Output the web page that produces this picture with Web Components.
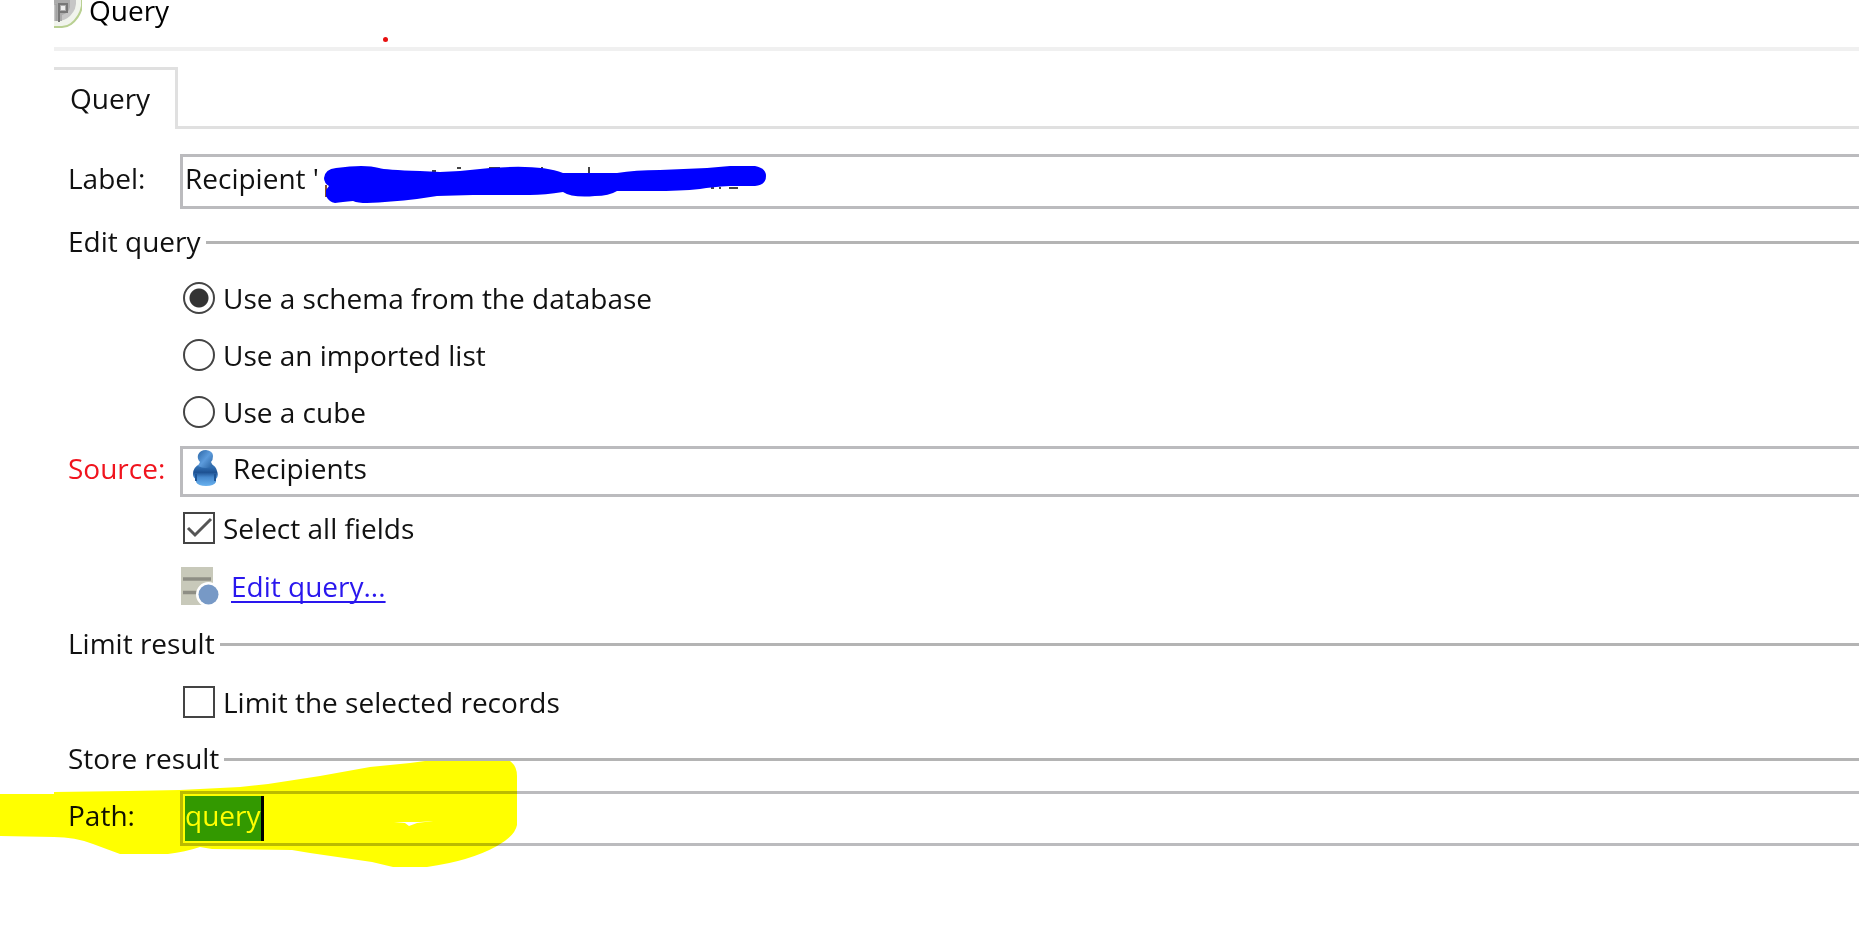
<!DOCTYPE html>
<html lang="en">
<head>
<meta charset="utf-8">
<title>Query</title>
<style>
  body { margin: 0; background: #fff; color: #111; font: 28px/38px "Open Sans", "Noto Sans", sans-serif; overflow: hidden; }
</style>
</head>
<body>
<query-window></query-window>
<script>
const define = (name, html) => customElements.define(name, class extends HTMLElement {
  constructor() {
    super();
    const t = document.createElement('template');
    t.innerHTML = html(this);
    this.attachShadow({ mode: 'open' }).append(t.content.cloneNode(true));
  }
});

define('title-bar', () => `
  <style>
    :host { display: flex; gap: 7px; height: 47px; margin-left: 54px; border-bottom: 4px solid #f0f0f0; color: #000; }
    svg { flex: none; width: 28px; height: 28px; }
    h1 { margin: 0; font: inherit; line-height: 20px; }
  </style>
  <svg viewBox="0 0 28 28" aria-hidden="true">
    <path d="M0 0H28V5Q27 17 17 25L10 27H0Z" fill="#f1f4ed"/>
    <path d="M28 0V6Q26 17 17 24Q13 27 8 27H0" fill="none" stroke="#b9d092" stroke-width="2"/>
    <path d="M0 0H22Q23 9 16 16Q11 21 3 21H0Z" fill="#c6c6c6"/>
    <path d="M0 0H16V7Q15 13 8 15V21H2V3H0Z" fill="#ababab"/>
    <path d="M5 22V4H13V12H5" fill="none" stroke="#777" stroke-width="2"/>
    <path d="M7 6H11V10H7Z" fill="#eee"/>
    <path d="M0 4H2V21" fill="none" stroke="#999" stroke-width="1"/>
  </svg>
  <h1><slot></slot></h1>`);

define('tab-strip', () => `
  <style>
    :host { display: flex; margin: 16px 0 0 54px; }
    button { box-sizing: border-box; width: 124px; height: 62px; padding: 0 0 4px 16px; border: 3px solid #e0e0e0; border-width: 3px 3px 0 0; background: none; font: inherit; color: inherit; text-align: left; }
    div { flex: 1; border-bottom: 3px solid #e0e0e0; }
  </style>
  <button type="button" role="tab" aria-selected="true"><slot></slot></button><div></div>`);

define('text-field', el => `
  <style>
    :host { display: flex; }
    label { flex: none; width: 112px; margin-left: -1px; box-sizing: border-box; padding-bottom: 8px; align-self: center; }
    .box { flex: 1; box-sizing: border-box; height: 55px; border: 3px solid #bbbbbe; border-right: 0; display: flex; align-items: center; padding: 0 0 8px 2px; }
    input { flex: 1; min-width: 0; border: 0; padding: 0; outline: 0; background: none; font: inherit; color: inherit; }
    :host([required]) label { color: #f0141e; }
    :host([required]) .box { height: 51px; padding-left: 10px; }
    ::slotted(svg) { flex: none; width: 25px; height: 36px; margin-right: 15px; }
    :host([selected]) .box { padding: 0 0 0 2px; }
    :host([selected]) input { flex: none; field-sizing: content; height: 45px; padding: 0 0 8px; box-sizing: border-box; background: #39f; color: #fff; border-right: 3px solid #000; }
  </style>
  <label for="f">${el.getAttribute('label')}</label>
  <div class="box"><slot></slot><input id="f" type="text" value="${el.getAttribute('value')}"></div>`);

define('group-title', () => `
  <style>
    :host { display: flex; align-items: center; gap: 5px; height: 58px; margin-left: -1px; }
    h2 { margin: 0; padding-bottom: 2px; font: inherit; }
    div { flex: 1; height: 3px; background: #b4b4b4; }
  </style>
  <h2><slot></slot></h2><div></div>`);

const choiceCss = `
    label { display: flex; align-items: center; gap: 8px; height: 57px; margin-left: 114px; }
    input { appearance: none; box-sizing: border-box; flex: none; width: 32px; height: 32px; margin: 0; border: 2px solid #444; background: #fff; }
    input[type=radio] { border-radius: 50%; }
    input[type=radio]:checked { background: radial-gradient(circle, #333 9px, #fff 10px); }`;

define('source-type', () => `
  <style>:host { display: block; } ${choiceCss}</style>
  <label><input type="radio" name="type" checked>Use a schema from the database</label>
  <label><input type="radio" name="type">Use an imported list</label>
  <label><input type="radio" name="type">Use a cube</label>`);

define('check-option', el => `
  <style>
    :host { display: block; }
    ${choiceCss}
    label { position: relative; }
    svg { position: absolute; left: 0; width: 32px; height: 32px; pointer-events: none; }
  </style>
  <label><input type="checkbox" ${el.hasAttribute('checked') ? 'checked' : ''}>
  ${el.hasAttribute('checked') ? '<svg viewBox="0 0 32 32" aria-hidden="true"><path d="M5 16L12 23L28 7" fill="none" stroke="#555" stroke-width="3"/></svg>' : ''}
  <slot></slot></label>`);

define('edit-link', () => `
  <style>
    :host { display: flex; align-items: center; gap: 12px; height: 59px; margin-left: 112px; }
    svg { flex: none; width: 38px; height: 38px; }
    a { color: #2a17ee; text-decoration-thickness: 2px; text-underline-offset: 4px; text-decoration-skip-ink: none; }
  </style>
  <svg viewBox="0 0 38 38" aria-hidden="true">
    <path d="M0 0H32V38H0Z" fill="#c8c9ba"/>
    <path d="M2 12H30M2 25.500H18" stroke="#8e8e85" stroke-width="3.500"/>
    <circle cx="27.500" cy="27.500" r="12.500" fill="#fff"/>
    <circle cx="27.500" cy="27.500" r="10" fill="#7799c6"/>
  </svg>
  <a href="#"><slot></slot></a>`);

define('pen-marks', () => `
  <style>
    :host { position: absolute; inset: 0; pointer-events: none; mix-blend-mode: multiply; }
    :host([solid]) { mix-blend-mode: normal; }
  </style>
  <slot></slot>`);

define('query-window', () => `
  <style>
    :host { display: block; position: relative; min-height: 100vh; background: #fff; }
    form { margin-left: 69px; padding-top: 25px; }
    group-title.first { margin: 4px 0 -2px -1px; }
    .source { margin: 6px 0 2px; }
    .path { margin-top: 3px; }
  </style>
  <title-bar>Query</title-bar>
  <tab-strip>Query</tab-strip>
  <form>
    <text-field label="Label:" value="Recipient '"></text-field>
    <group-title class="first">Edit query</group-title>
    <source-type></source-type>
    <text-field class="source" required label="Source:" value="Recipients">
      <svg viewBox="0 0 25 36" aria-hidden="true">
        <defs>
          <linearGradient id="h" x1="0" y1="0" x2="1" y2="1"><stop offset="0" stop-color="#2c66a5"/><stop offset=".5" stop-color="#5c9bdc"/><stop offset="1" stop-color="#27609f"/></linearGradient>
          <linearGradient id="b" x1="0" y1="0" x2="0" y2="1"><stop offset="0" stop-color="#3d7fc4"/><stop offset=".38" stop-color="#1d5192"/><stop offset=".6" stop-color="#4688cd"/><stop offset="1" stop-color="#69b2ef"/></linearGradient>
        </defs>
        <path d="M7 14Q0 17 0 24Q0 28 3 29V32Q5 36 13 36Q21 36 23 32V29Q26 26 24 21Q23 16 18 14Z" fill="url(#b)"/>
        <path d="M3 24V31M22 24V31" stroke="#1f5596" stroke-width="2"/>
        <path d="M5 5Q7 0 13 0Q20 1 20 6Q20 10 18 12L20 16Q13 20 5 16L7 12Q4 9 5 5Z" fill="url(#h)"/>
      </svg>
    </text-field>
    <check-option checked>Select all fields</check-option>
    <edit-link>Edit query...</edit-link>
    <group-title>Limit result</group-title>
    <check-option>Limit the selected records</check-option>
    <group-title>Store result</group-title>
    <text-field class="path" selected label="Path:" value="query"></text-field>
  </form>
  <pen-marks>
    <svg width="540" height="900" viewBox="0 0 540 900" aria-hidden="true">
      <path fill="#ff0" fill-rule="evenodd" d="M0 794H54V792L128 791L180 790L240 787L268 784L320 776L370 767L410 763L425 761H510Q517 766 517 776V825Q515 836 497 846Q470 861 427 867H393L372 862L310 853L292 850L212 849L200 847Q185 852 168 854H120L93 844Q75 837 54 837L0 836ZM394 822L405 823L409 826L417 823L433 821L420 822Z"/>
    </svg>
  </pen-marks>
  <pen-marks solid>
    <svg width="800" height="230" viewBox="0 0 800 230" aria-hidden="true">
      <path d="M326 185V197" stroke="#85502c" stroke-width="2"/>
      <path d="M432 171H436M457 168H461M489 168H500M541 168H543M589 167V174M711 188H714M719 188H721M729 188H738" stroke="#444" stroke-width="2"/>
      <path fill="#00f" d="M324 178Q325 169 336 168Q365 164 379 168Q385 170 420 171L440 172Q465 171 490 168Q540 164 563 173H617Q635 170 660 170L707 168L730 166H755Q766 168 766 176Q766 185 755 186H730Q712 187 700 189Q680 191 653 191H617Q609 196 595 196Q572 198 563 192Q545 195 530 195H473L437 196L417 199Q390 202 367 203Q358 203 353 201Q342 202 335 203Q329 202 326 196V190L329 186Q324 183 324 178Z"/>
      <circle cx="385.500" cy="39.500" r="2.500" fill="#e81010"/>
    </svg>
  </pen-marks>`);
</script>
</body>
</html>
